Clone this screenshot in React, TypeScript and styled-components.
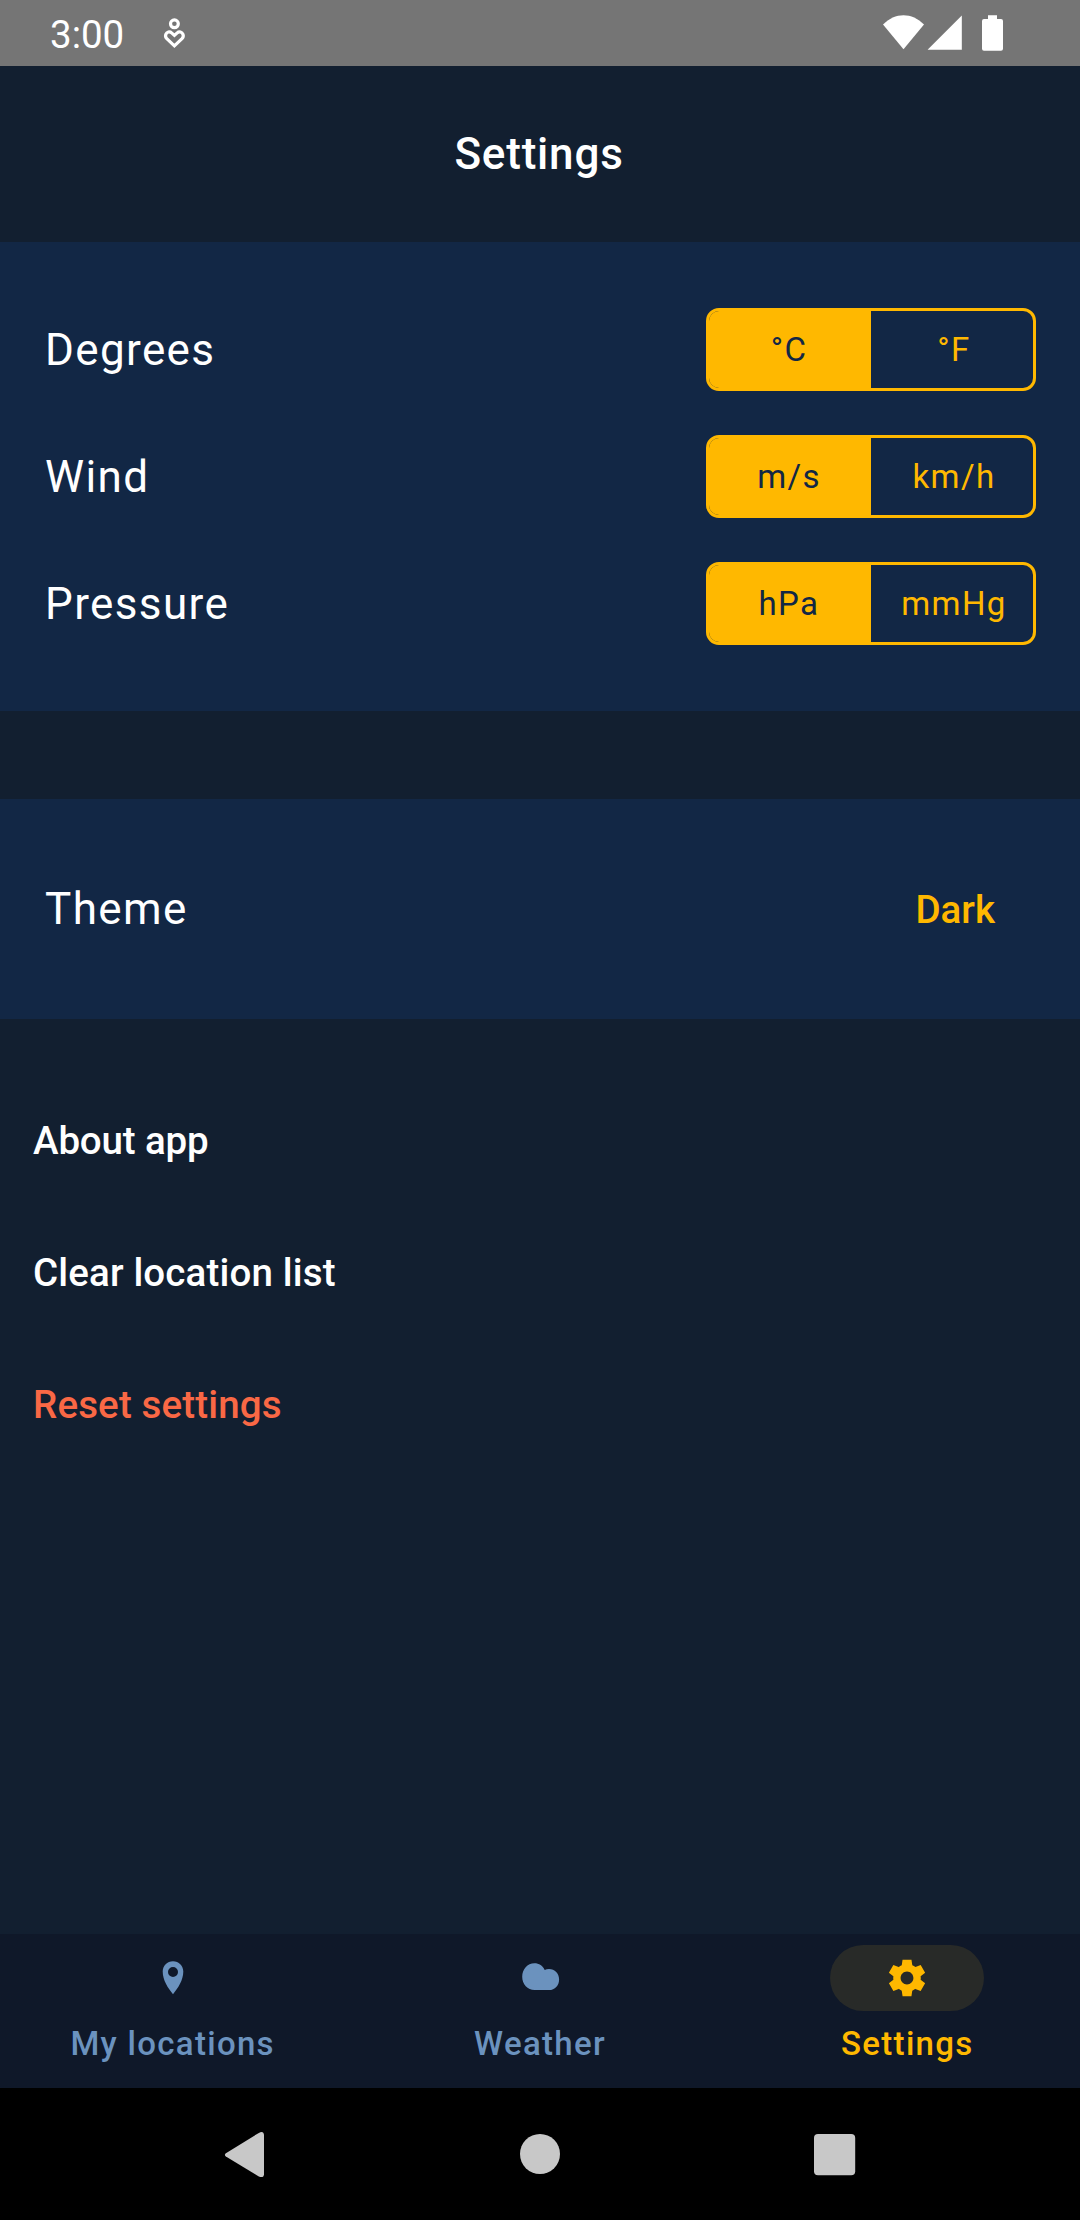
import React, { useState } from "react";
import styled, { createGlobalStyle } from "styled-components";

const color = {
  background: "#121f30",
  surface: "#122745",
  nav: "#0f1829",
  accent: "#ffb800",
  muted: "#6b92be",
  danger: "#f96845",
  statusBar: "#757575",
  systemIcon: "#c8c8c8",
};

const GlobalStyle = createGlobalStyle`
  *, *::before, *::after { box-sizing: border-box; }
  body { margin: 0; background: ${color.background}; }
  button { border: 0; padding: 0; background: none; font: inherit; color: inherit; cursor: pointer; }
`;

const Screen = styled.div`
  display: flex;
  flex-direction: column;
  width: 1080px;
  height: 2220px;
  overflow: hidden;
  background: ${color.background};
  color: #fff;
  font-family: Roboto, "Liberation Sans", sans-serif;
`;

const StatusBar = styled.header`
  display: flex;
  align-items: center;
  height: 66px;
  flex: none;
  padding: 0 77px 0 50px;
  background: ${color.statusBar};
`;

const Clock = styled.time`
  width: 112px;
  padding-top: 3px;
  font-size: 38.5px;
  line-height: 46px;
`;

const StatusIcons = styled.div`
  display: flex;
  margin-left: auto;
`;

const TitleBar = styled.div`
  display: flex;
  align-items: center;
  justify-content: center;
  height: 176px;
  flex: none;
  padding-right: 2px;
`;

const Title = styled.h1`
  margin: 0;
  font-size: 44px;
  font-weight: 500;
  letter-spacing: 0.8px;
  line-height: 66px;
`;

const Card = styled.section<{ $gapAbove?: boolean }>`
  display: flex;
  flex-direction: column;
  gap: 44px;
  flex: none;
  margin-top: ${(p) => (p.$gapAbove ? "88px" : "0")};
  padding: 66px 44px;
  background: ${color.surface};
`;

const SettingRow = styled.div<{ $height: number }>`
  display: flex;
  align-items: center;
  justify-content: space-between;
  height: ${(p) => p.$height}px;
`;

const Label = styled.span`
  padding-left: 1px;
  font-size: 44px;
  letter-spacing: 1.375px;
  line-height: 66px;
`;

const Segmented = styled.div`
  display: grid;
  grid-template-columns: 1fr 1fr;
  width: 330px;
  height: 83px;
  overflow: hidden;
  border: 3px solid ${color.accent};
  border-radius: 13px;
`;

const Segment = styled.button<{ $active: boolean }>`
  background: ${(p) => (p.$active ? color.accent : "transparent")};
  color: ${(p) => (p.$active ? color.surface : color.accent)};
  font-size: 33px;
  letter-spacing: 1.375px;
  line-height: 44px;

  &:first-child { padding-right: 2px; }
  &:last-child { padding-left: 4px; }
`;

const ThemeButton = styled.button`
  padding: 0 41px;
  color: ${color.accent};
  font-size: 38.5px;
  font-weight: 500;
  line-height: 55px;
`;

const Actions = styled.div`
  display: flex;
  flex: 1;
  flex-direction: column;
  align-items: flex-start;
  padding: 55px 33px 0;
`;

const Action = styled.button<{ $danger?: boolean; $tracking?: number }>`
  height: 132px;
  color: ${(p) => (p.$danger ? color.danger : "#fff")};
  font-size: 38.5px;
  font-weight: 500;
  letter-spacing: ${(p) => p.$tracking ?? 0.15}px;
  line-height: 55px;
`;

const BottomNav = styled.nav`
  display: grid;
  grid-template-columns: repeat(3, 1fr);
  column-gap: 22px;
  flex: none;
  height: 154px;
  padding-top: 11px;
  background: ${color.nav};
`;

const NavItem = styled.button<{ $active: boolean }>`
  display: flex;
  flex-direction: column;
  align-items: center;
  gap: 11px;
  color: ${(p) => (p.$active ? color.accent : color.muted)};
  font-size: 33px;
  font-weight: 500;
  letter-spacing: 1.3px;
  line-height: 44px;
`;

const Indicator = styled.span<{ $active: boolean }>`
  display: flex;
  align-items: center;
  justify-content: center;
  width: 154px;
  height: 66px;
  border-radius: 33px;
  background: ${(p) => (p.$active ? "#282a28" : "transparent")};
`;

const SystemBar = styled.footer`
  display: flex;
  align-items: center;
  justify-content: center;
  gap: 228px;
  flex: none;
  height: 132px;
  background: #000;
`;

const SystemButton = styled.button`
  display: flex;
  width: 66px;
  height: 66px;
  color: ${color.systemIcon};
`;

const WellbeingIcon = () => (
  <svg width="24" height="66" viewBox="162 0 24 66" fill="none" stroke="#fff" strokeWidth="3.2">
    <circle cx="174.4" cy="23.8" r="3.9" />
    <path d="M174.4 35.4 171.6 32.9C169.6 31 166.8 31.9 165.8 34.3C165.2 36 165.6 37.5 166.8 38.7L174.4 45.8L182 38.7C183.2 37.5 183.6 36 183 34.3C182 31.9 179.2 31 177.2 32.9Z" />
  </svg>
);

const SignalIcons = () => (
  <svg width="121" height="66" viewBox="882 0 121 66" fill="#fff">
    <path d="M903.5 49.3 883 24.6C895 12 912 12 924 24.6Z" />
    <path d="M927.6 49.8 961.8 15.4V49.8Z" />
    <path d="M988 15.2h9V19h4a2 2 0 0 1 2 2v27.8a2 2 0 0 1-2 2h-17a2 2 0 0 1-2-2V21a2 2 0 0 1 2-2h4z" />
  </svg>
);

const PinIcon = () => (
  <svg width="44" height="44" viewBox="0 0 44 44" fill="currentColor">
    <path
      fillRule="evenodd"
      d="M22 5.2C16.2 5.2 11.7 9.6 11.7 15.6C11.7 24.2 17 32.4 22 38.2C27 32.4 32.3 24.2 32.3 15.6C32.3 9.6 27.8 5.2 22 5.2ZM22 11a5 5 0 1 1 0 10a5 5 0 1 1 0-10Z"
    />
  </svg>
);

const CloudIcon = () => (
  <svg width="44" height="44" viewBox="0 0 44 44" fill="currentColor">
    <path d="M16.6 34.1C9.6 34.1 4.2 28.4 4.2 20.8C4.2 13.2 9.4 7.2 16.4 7.2C21 7.2 25 9.8 26.7 14.1C28 13.5 29.3 13.1 31 13.1C36.8 13.1 41.1 17.6 41.1 23.5C41.1 29.6 37 34.1 31 34.1Z" />
  </svg>
);

const GearIcon = () => (
  <svg width="44" height="44" viewBox="0 0 24 24" fill="currentColor">
    <path d="M19.44 12.99l-.01.02c.04-.33.08-.67.08-1.01 0-.34-.03-.66-.07-.99l.01.02 2.44-1.92-2.43-4.22-2.87 1.16.01.01c-.52-.4-1.09-.74-1.71-1h.01L14.44 2H9.57l-.44 3.07h.01c-.62.26-1.19.6-1.71 1l.01-.01-2.88-1.17-2.44 4.22 2.44 1.92.01-.02c-.04.33-.07.65-.07.99 0 .34.03.68.08 1.01l-.01-.02-2.1 1.65-.33.26 2.43 4.2 2.88-1.15-.02-.04c.53.41 1.1.75 1.73 1.01h-.03L9.58 22h4.85s.03-.18.06-.42l.38-2.65h-.01c.62-.26 1.2-.6 1.73-1.01l-.02.04 2.88 1.15 2.43-4.2s-.14-.12-.33-.26l-2.11-1.66zM12 15.5c-1.93 0-3.5-1.57-3.5-3.5s1.57-3.5 3.5-3.5 3.5 1.57 3.5 3.5-1.57 3.5-3.5 3.5z" />
  </svg>
);

const BackIcon = () => (
  <svg width="66" height="66" viewBox="0 0 66 66" fill="currentColor">
    <path d="M12.9 32.2 45.8 11.9Q50.6 9.6 51 14V53.2Q50.6 57.4 45.8 55.4L12.9 35.6Q10.9 33.9 12.9 32.2Z" />
  </svg>
);

const HomeIcon = () => (
  <svg width="66" height="66" viewBox="0 0 66 66" fill="currentColor">
    <circle cx="33" cy="33" r="20" />
  </svg>
);

const RecentsIcon = () => (
  <svg width="66" height="66" viewBox="0 0 66 66" fill="currentColor">
    <rect x="13" y="13" width="41.2" height="41.2" rx="4" />
  </svg>
);

const units = [
  { label: "Degrees", options: ["°C", "°F"] },
  { label: "Wind", options: ["m/s", "km/h"] },
  { label: "Pressure", options: ["hPa", "mmHg"] },
];

const tabs = [
  { label: "My locations", Icon: PinIcon },
  { label: "Weather", Icon: CloudIcon },
  { label: "Settings", Icon: GearIcon },
];

function UnitRow({ label, options }: { label: string; options: string[] }) {
  const [selected, setSelected] = useState(0);
  return (
    <SettingRow $height={83}>
      <Label>{label}</Label>
      <Segmented>
        {options.map((option, i) => (
          <Segment key={option} $active={i === selected} onClick={() => setSelected(i)}>
            {option}
          </Segment>
        ))}
      </Segmented>
    </SettingRow>
  );
}

export default function App() {
  const [tab, setTab] = useState("Settings");
  return (
    <>
      <GlobalStyle />
      <Screen>
        <StatusBar>
          <Clock>3:00</Clock>
          <WellbeingIcon />
          <StatusIcons>
            <SignalIcons />
          </StatusIcons>
        </StatusBar>
        <TitleBar>
          <Title>Settings</Title>
        </TitleBar>
        <Card>
          {units.map((unit) => (
            <UnitRow key={unit.label} {...unit} />
          ))}
        </Card>
        <Card $gapAbove>
          <SettingRow $height={88}>
            <Label>Theme</Label>
            <ThemeButton>Dark</ThemeButton>
          </SettingRow>
        </Card>
        <Actions>
          <Action $tracking={-0.15}>About app</Action>
          <Action>Clear location list</Action>
          <Action $danger>Reset settings</Action>
        </Actions>
        <BottomNav>
          {tabs.map(({ label, Icon }) => (
            <NavItem key={label} $active={label === tab} onClick={() => setTab(label)}>
              <Indicator $active={label === tab}>
                <Icon />
              </Indicator>
              {label}
            </NavItem>
          ))}
        </BottomNav>
        <SystemBar>
          <SystemButton aria-label="Back"><BackIcon /></SystemButton>
          <SystemButton aria-label="Home"><HomeIcon /></SystemButton>
          <SystemButton aria-label="Recents"><RecentsIcon /></SystemButton>
        </SystemBar>
      </Screen>
    </>
  );
}
